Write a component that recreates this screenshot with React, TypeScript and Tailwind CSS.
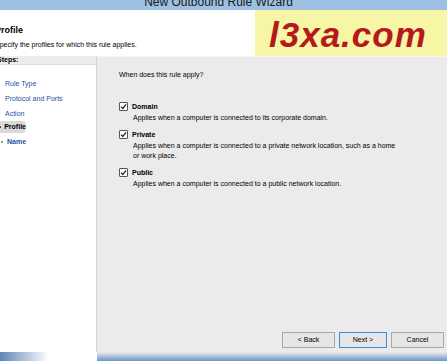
export default function App() {
  const steps = ["Rule Type", "Protocol and Ports", "Action"];
  const options = [
    { name: "Domain", desc: ["Applies when a computer is connected to its corporate domain."] },
    {
      name: "Private",
      desc: [
        "Applies when a computer is connected to a private network location, such as a home",
        "or work place.",
      ],
    },
    { name: "Public", desc: ["Applies when a computer is connected to a public network location."] },
  ];

  return (
    <div className="w-[447px] h-[361px] overflow-hidden flex flex-col bg-white font-['Liberation_Sans',Arial,sans-serif] text-black">
      {/* title bar */}
      <div className="h-[10px] bg-[#9ec0e3] flex justify-center overflow-hidden">
        <span className="text-[12px] leading-[12px] -mt-[4px] ml-[-10px] text-[#1a1a1a]">
          New Outbound Rule Wizard
        </span>
      </div>

      {/* header */}
      <div className="h-[46px] flex bg-white">
        <div className="flex-1 flex flex-col pt-[15px] -ml-[5px]">
          <span className="text-[9px] leading-[11px] font-bold">Profile</span>
          <span className="text-[7px] leading-[9px] mt-[4px]">
            Specify the profiles for which this rule applies.
          </span>
        </div>
        <div className="w-[192px] bg-[#f7f5a6] flex items-center pl-[14px] pt-[2px]">
          <span className="text-[35px] leading-none font-bold italic text-[#b5191b] tracking-[1px]">
            l3xa.com
          </span>
        </div>
      </div>

      {/* body */}
      <div className="flex-1 flex">
        <div className="w-[97px] bg-white border-r border-[#d6d6d6] flex flex-col">
          <div className="h-[9px] bg-[#ececec] border-b border-[#dcdcdc] flex items-center -ml-[3px]">
            <span className="text-[7px] leading-[8px] font-bold">Steps:</span>
          </div>
          <div className="flex flex-col pt-[11px]">
            {steps.map((s) => (
              <div key={s} className="h-[15px] flex items-center pl-[5px]">
                <span className="text-[7px] leading-[8px] text-[#1d4fa8]">{s}</span>
              </div>
            ))}
            <div className="h-[12px] flex items-center gap-[3px] bg-[#dadada] rounded-r-[4px] w-[26px]">
              <span className="w-[2px] h-[2px] rounded-full bg-[#333]" />
              <span className="text-[7px] leading-[8px] font-bold">Profile</span>
            </div>
            <div className="h-[16px] flex items-center gap-[4px] pl-[1px] mt-[1px]">
              <span className="w-[2px] h-[2px] rounded-full bg-[#2e9a3a]" />
              <span className="text-[7px] leading-[8px] font-bold text-[#1d4fa8]">Name</span>
            </div>
          </div>
        </div>

        <div className="flex-1 flex flex-col bg-[#ebebeb] border-t border-[#f5f5f5]">
          <div className="flex-1 flex flex-col pl-[22px] pt-[13px]">
            <span className="text-[7px] leading-[9px]">When does this rule apply?</span>
            <div className="flex flex-col gap-[7px] mt-[23px]">
              {options.map((o) => (
                <div key={o.name} className="flex flex-col">
                  <div className="flex items-center gap-[4px]">
                    <span className="w-[9px] h-[9px] border border-[#555] bg-white rounded-[1px] flex items-center justify-center">
                      <svg viewBox="0 0 10 10" className="w-[7px] h-[7px]">
                        <path d="M1.5 5.2 L4 7.8 L8.6 2" stroke="#222" strokeWidth="1.8" fill="none" />
                      </svg>
                    </span>
                    <span className="text-[7px] leading-[9px] font-bold">{o.name}</span>
                  </div>
                  <div className="pl-[14px] flex flex-col mt-[2px]">
                    {o.desc.map((d) => (
                      <span key={d} className="text-[7px] leading-[10px]">
                        {d}
                      </span>
                    ))}
                  </div>
                </div>
              ))}
            </div>
          </div>
          <div className="flex justify-end gap-[4px] pr-[3px] pb-[4px]">
            <button className="w-[53px] h-[16px] bg-[#e6e6e6] border border-[#a8a8a8] text-[7px] leading-[8px]">
              &lt; Back
            </button>
            <button className="w-[48px] h-[16px] bg-[#e6e6e6] border border-[#3c8bd6] text-[7px] leading-[8px]">
              Next &gt;
            </button>
            <button className="w-[53px] h-[16px] bg-[#e6e6e6] border border-[#a8a8a8] text-[7px] leading-[8px]">
              Cancel
            </button>
          </div>
        </div>
      </div>

      {/* bottom frame */}
      <div className="h-[9px] flex">
        <div className="w-[97px] bg-gradient-to-r from-[#5f86b5] via-white to-white" />
        <div className="flex-1 bg-gradient-to-b from-[#ebebeb] to-[#6d95c6]" />
      </div>
    </div>
  );
}
